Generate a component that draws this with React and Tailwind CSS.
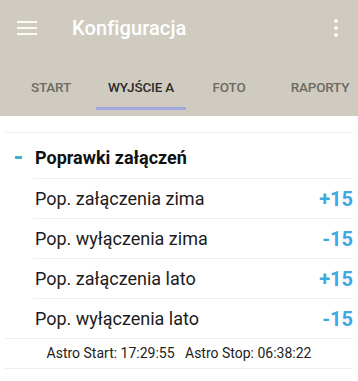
import React from "react";

const rows = [
  { label: "Pop. załączenia zima", value: "+15" },
  { label: "Pop. wyłączenia zima", value: "-15" },
  { label: "Pop. załączenia lato", value: "+15" },
  { label: "Pop. wyłączenia lato", value: "-15" },
];

const tabs = [
  { name: "START", w: "w-[90px]" },
  { name: "WYJŚCIE A", w: "w-[90px]", active: true },
  { name: "FOTO", w: "w-[86px]" },
  { name: "RAPORTY", w: "w-[96px]" },
];

const App = () => {
  return (
    <div className="w-[358px] h-[381px] overflow-hidden bg-white font-['Roboto',sans-serif]">
      {/* App bar + tabs */}
      <div className="bg-[#cfcbc0]">
        <div className="h-[56px] flex items-center">
          <svg width="20" height="14" viewBox="0 0 20 14" className="ml-[17px]">
            <rect x="0" y="0" width="20" height="2" fill="#fbf9f2" />
            <rect x="0" y="6" width="20" height="2" fill="#fbf9f2" />
            <rect x="0" y="12" width="20" height="2" fill="#fbf9f2" />
          </svg>
          <div className="ml-[35px] text-[20px] font-medium text-white tracking-[0.1px]">
            Konfiguracja
          </div>
          <div className="ml-auto mr-[20px] flex flex-col gap-[3px]">
            <span className="w-[4px] h-[4px] rounded-full bg-[#fbf9f2]" />
            <span className="w-[4px] h-[4px] rounded-full bg-[#fbf9f2]" />
            <span className="w-[4px] h-[4px] rounded-full bg-[#fbf9f2]" />
          </div>
        </div>
        <div className="h-[60px] flex pl-[6px] overflow-hidden">
          {tabs.map((t) => (
            <div
              key={t.name}
              className={`${t.w} flex-none relative flex items-center justify-center pt-[3px] text-[13.5px] font-medium tracking-[-0.2px] ${
                t.active ? "text-[#2d2b27]" : "text-[#6d6a62]"
              }`}
            >
              {t.name}
              {t.active && (
                <span className="absolute left-0 right-0 bottom-[6px] h-[3px] bg-[#a4a8e0]" />
              )}
            </div>
          ))}
        </div>
      </div>

      {/* Content */}
      <div className="px-[5px] pt-[16px]">
        <div className="border-t border-[#efefef]" />
        <div className="h-[45px] flex items-center pt-[4px]">
          <span className="ml-[10px] w-[7px] h-[3px] bg-[#3fb4c6]" />
          <span className="ml-[13px] text-[18px] font-bold text-[#111]">
            Poprawki załączeń
          </span>
        </div>
        <div className="pl-[28px]">
          {rows.map((r) => (
            <div
              key={r.label}
              className="h-[40px] border-t border-[#efefef] flex items-center justify-between pl-[2px]"
            >
              <span className="text-[18px] text-[#1b1b1b]">{r.label}</span>
              <span className="text-[20px] font-bold text-[#3fa9df]">{r.value}</span>
            </div>
          ))}
        </div>
        <div className="h-[31px] border-t border-b border-[#efefef] flex items-center justify-center text-[14px] text-[#222] whitespace-pre">
          {"Astro Start: 17:29:55   Astro Stop: 06:38:22"}
        </div>
      </div>
    </div>
  );
};

export default App;
